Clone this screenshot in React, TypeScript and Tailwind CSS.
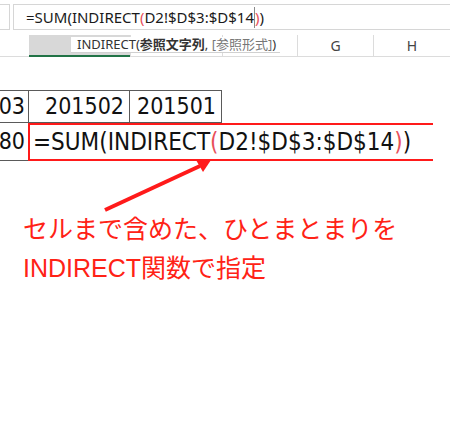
import React from "react";

/**
 * Excel screenshot: INDIRECT formula with annotation.
 */

const columns = [
  { w: "w-[29px]", label: "", selected: false },
  { w: "w-[101px]", label: "", selected: true },
  { w: "w-[92px]", label: "", selected: false },
  { w: "w-[75px]", label: "", selected: false },
  { w: "w-[76px]", label: "G", selected: false },
  { w: "w-[77px]", label: "H", selected: false },
];

function FormulaText({ paren }: { paren: string }): React.ReactElement {
  return (
    <>
      =SUM(INDIRECT<span className={paren}>(</span>D2!$D$3:$D$14
      <span className={paren}>)</span>)
    </>
  );
}

export default function App(): React.ReactElement {
  return (
    <div className="relative w-[450px] h-[424px] bg-white overflow-hidden font-['Noto_Sans','Noto_Sans_CJK_JP',sans-serif] text-[#222]">
      {/* Formula bar */}
      <div className="flex pt-[4px] h-[30px]">
        <div className="w-[10px] h-[26px] border-y border-r border-[#d6d6d6]" />
        <div className="ml-[3px] flex-1 h-[26px] border-y border-l border-[#d6d6d6] flex items-center pl-[12px] text-[15px] text-[#1a1a1a] whitespace-nowrap">
          <span>
            =SUM(INDIRECT<span className="text-[#e8505a]">(</span>D2!$D$3:$D$14
          </span>
          <span className="inline-block w-px h-[21px] bg-[#8a8a8a]" />
          <span>
            <span className="text-[#e8505a]">)</span>)
          </span>
        </div>
      </div>

      {/* Column headers */}
      <div className="relative flex mt-[5px] h-[22px]">
        {columns.map((c, i) => (
          <div
            key={i}
            className={`${c.w} h-full flex items-center justify-center text-[14px] text-[#444] ${
              c.selected
                ? "bg-[#d8d8d8] border-b-2 border-[#217346]"
                : "border-b border-[#dcdcdc] mb-[1px]"
            } ${i >= 2 ? "border-l border-l-[#dcdcdc]" : ""}`}
          >
            {c.label}
          </div>
        ))}
        {/* tooltip */}
        <div className="absolute left-[71px] top-[2px] w-[209px] h-[16px] bg-white border-b border-[#d0d0d0] flex items-center pl-[6px] text-[13px] text-[#333] whitespace-nowrap leading-none">
          INDIRECT(<span className="font-bold">参照文字列</span>,&nbsp;
          <span className="text-[#777]">[参照形式]</span>)
        </div>
      </div>

      {/* Sheet cells */}
      <div className="mt-[33px] font-['DejaVu_Sans_Condensed','DejaVu_Sans',sans-serif] text-[23px] text-[#111]">
        <div className="flex h-[33px] w-[222px] border-t border-[#5a5a5a]">
          <div className="w-[29px] border-r border-b border-[#5a5a5a] flex items-center justify-end pr-[3px]">
            03
          </div>
          <div className="w-[101px] border-r border-b border-[#5a5a5a] flex items-center justify-end pr-[5px]">
            201502
          </div>
          <div className="w-[92px] border-r border-b border-[#5a5a5a] flex items-center justify-end pr-[5px]">
            201501
          </div>
        </div>
        <div className="flex h-[38px]">
          <div className="w-[29px] border-r border-b border-[#5a5a5a] flex items-center justify-end pr-[3px]">
            80
          </div>
          <div className="w-[405px] -ml-px border-y-2 border-l-2 border-[#ff1a1a] flex items-center pl-[3px] text-[24px] whitespace-nowrap">
            <FormulaText paren="text-[#e8505a]" />
          </div>
        </div>
      </div>

      {/* Annotation */}
      <div className="mt-[49px] pl-[23px] text-[25px] leading-[39px] text-[#ff2216] font-['Liberation_Sans','Noto_Sans_CJK_JP',sans-serif]">
        <div>セルまで含めた、ひとまとまりを</div>
        <div>INDIRECT関数で指定</div>
      </div>

      {/* Arrow */}
      <svg className="absolute left-0 top-0 pointer-events-none" width="450" height="424">
        <line x1="105" y1="210" x2="200" y2="166" stroke="#ff1a1a" strokeWidth="4" />
        <polygon points="211,160 196,160 203,172" fill="#ff1a1a" />
      </svg>
    </div>
  );
}
